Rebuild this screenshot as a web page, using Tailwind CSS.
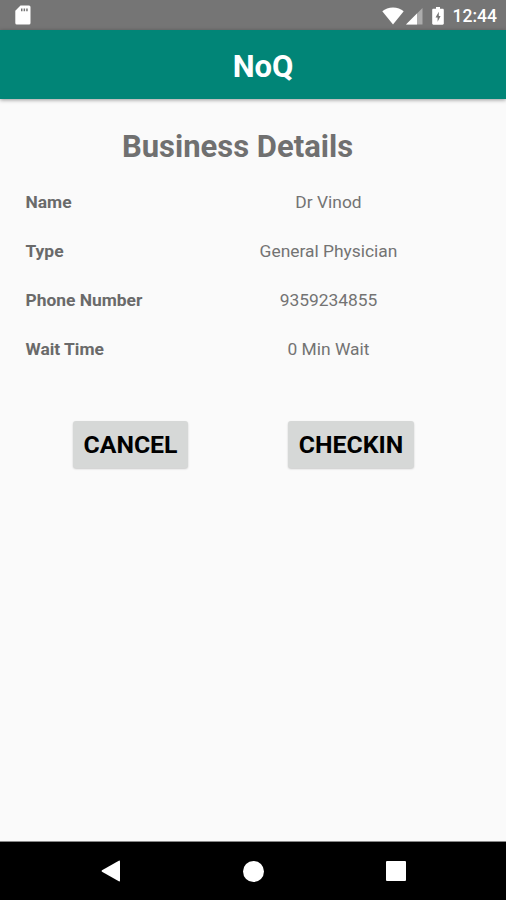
<!DOCTYPE html>
<html lang="en">
<head>
<meta charset="utf-8">
<title>NoQ</title>
<script src="https://cdn.jsdelivr.net/npm/@tailwindcss/browser@4"></script>
</head>
<body class="font-['Roboto',sans-serif] bg-[#fafafa]">
<div class="flex h-[900px] w-[506px] flex-col overflow-hidden">
  <div class="flex h-[30px] shrink-0 items-center justify-between bg-[#757575] pl-[15px] pr-[9px] text-white">
    <svg class="h-5 w-4" viewBox="0 0 16 20" fill="currentColor"><path fill-rule="evenodd" d="M5.500 .5H14a1.500 1.500 0 0 1 1.500 1.500v16a1.500 1.500 0 0 1-1.500 1.500H1.800A1.500 1.500 0 0 1 .3 18V5.700zM6 3.500v2.800h1.500V3.500zM8.600 3.500v2.800h1.500V3.500zM11.200 3.500v2.800h1.500V3.500z"/></svg>
    <div class="flex items-center pt-[2px]">
      <svg class="-mt-px h-[18px] w-[22px]" viewBox="0 0 22 18" fill="currentColor"><path d="M11 17.500L.3 4.200C3 1.900 6.800.5 11 .5s8 1.400 10.700 3.700z"/></svg>
      <svg class="-mt-px ml-[2px] h-[18px] w-[17px]" viewBox="0 0 17 18"><path d="M0 17.500L16.500 1v16.500z" fill="#fff" fill-opacity=".4"/><path d="M0 17.500L11 6.500v11z" fill="#fff"/></svg>
      <svg class="-mt-px ml-[9px] h-[18px] w-3" viewBox="0 0 12 18" fill="currentColor"><path fill-rule="evenodd" d="M4 0h4v1.800h2.600c.7 0 1.200.5 1.200 1.200v13.500c0 .7-.5 1.200-1.200 1.200H1.400c-.7 0-1.200-.5-1.200-1.200V3c0-.7.5-1.200 1.200-1.200H4zM6.800 4.800L3.500 10.500h2.100v4.300L8.600 9H6.800z"/></svg>
      <span class="ml-[9px] text-[17.500px] leading-[28px] font-medium">12:44</span>
    </div>
  </div>
  <header class="z-10 flex h-[69px] shrink-0 items-center justify-center bg-[#018577] pt-[4px] pl-5 shadow-[0_1px_4px_rgba(0,0,0,0.4)]">
    <h1 class="text-[31px] leading-9 font-bold text-white">NoQ</h1>
  </header>
  <main class="flex grow flex-col">
    <h2 class="mt-[30px] w-[475px] text-center text-[31px] leading-9 font-bold text-[#707070]">Business Details</h2>
    <dl class="mt-[13px] grid grid-cols-[177px_252px] pl-[25.500px] text-[17.400px] leading-[49px] text-[#737373]">
      <dt class="font-bold text-[#6a6a6a]">Name</dt><dd class="text-center">Dr Vinod</dd>
      <dt class="font-bold text-[#6a6a6a]">Type</dt><dd class="text-center">General Physician</dd>
      <dt class="font-bold text-[#6a6a6a]">Phone Number</dt><dd class="text-center">9359234855</dd>
      <dt class="font-bold text-[#6a6a6a]">Wait Time</dt><dd class="text-center">0 Min Wait</dd>
    </dl>
    <div class="mt-[47px] flex gap-[100px] pl-[73px] text-[24.800px] font-bold text-black">
      <button class="h-[47px] w-[115px] rounded-[3px] bg-[#d6d8d7] shadow-[0_1px_2px_rgba(0,0,0,0.2)]">CANCEL</button>
      <button class="h-[47px] w-[126px] rounded-[3px] bg-[#d6d8d7] shadow-[0_1px_2px_rgba(0,0,0,0.2)]">CHECKIN</button>
    </div>
  </main>
  <nav class="flex h-[59px] shrink-0 items-center justify-between border-t border-[#888] bg-black pr-[100px] pl-[101px] text-white">
    <svg class="h-[22px] w-5" viewBox="0 0 20 22" fill="currentColor"><path d="M1 10.200L17.800.700q1.200-.5 1.200.700v19.200q0 1.200-1.200.700L1 11.800q-1-.8 0-1.600z"/></svg>
    <div class="size-[21px] rounded-full bg-white"></div>
    <div class="size-5 rounded-[1px] bg-white"></div>
  </nav>
</div>
</body>
</html>
